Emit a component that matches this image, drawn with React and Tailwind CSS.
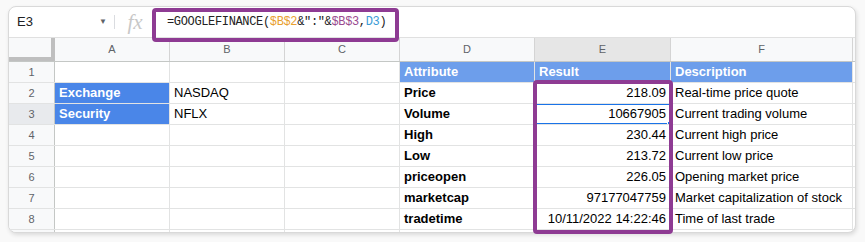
import React from "react";

const cols = [
  { key: "A", w: "w-[115px]" },
  { key: "B", w: "w-[115px]" },
  { key: "C", w: "w-[115px]" },
  { key: "D", w: "w-[135px]" },
  { key: "E", w: "w-[136px]" },
  { key: "F", w: "w-[182px]" },
];

const rows = [
  { n: 1, A: "", B: "", D: "Attribute", E: "Result", F: "Description", head: true },
  { n: 2, A: "Exchange", B: "NASDAQ", D: "Price", E: "218.09", F: "Real-time price quote" },
  { n: 3, A: "Security", B: "NFLX", D: "Volume", E: "10667905", F: "Current trading volume" },
  { n: 4, D: "High", E: "230.44", F: "Current high price" },
  { n: 5, D: "Low", E: "213.72", F: "Current low price" },
  { n: 6, D: "priceopen", E: "226.05", F: "Opening market price" },
  { n: 7, D: "marketcap", E: "97177047759", F: "Market capitalization of stock" },
  { n: 8, D: "tradetime", E: "10/11/2022 14:22:46", F: "Time of last trade" },
];

const Cell = ({ w, className = "", children }) => (
  <div className={`${w} shrink-0 h-full border-r border-[#e2e3e3] px-[4px] flex items-center overflow-hidden whitespace-nowrap ${className}`}>
    {children}
  </div>
);

export default function App() {
  return (
    <div className="w-[865px] h-[242px] bg-[#f9f9f9] relative" style={{ fontFamily: '"Liberation Sans", Arial, sans-serif' }}>
      <div className="absolute left-[8px] top-[6px] w-[848px] h-[227px] bg-white rounded-[8px] border border-[#d9d9d9] shadow-[1px_2px_4px_rgba(0,0,0,0.12)] overflow-hidden">
        {/* formula bar */}
        <div className="h-[31px] flex items-center border-b border-[#e0e0e0] text-[13px]">
          <div className="w-[104px] pl-[8px] pr-[6px] flex items-center justify-between text-[#202124]">
            <span>E3</span>
            <span className="text-[#5f6368] text-[8px]">▼</span>
          </div>
          <div className="w-px h-[14px] bg-[#dadce0] ml-[1px]"></div>
          <div className="w-[40px] flex justify-center text-[#c8c8c8] italic text-[21px] leading-none" style={{ fontFamily: '"Liberation Serif", serif' }}>fx</div>
          <div className="pl-[12px] text-[12px] tracking-[-0.35px] text-[#222]" style={{ fontFamily: '"Liberation Mono", monospace' }}>
            =GOOGLEFINANCE(<span className="text-[#e8a02f]">$B$2</span>&amp;":"&amp;<span className="text-[#9a4a8f]">$B$3</span>,<span className="text-[#3b9bd6]">D3</span>)
          </div>
        </div>

        {/* column headers */}
        <div className="h-[24px] flex bg-[#f8f9fa] text-[11px] text-[#5f6368] border-b border-[#c4c7c5]">
          <div className="w-[46px] shrink-0 h-full border-r-[4px] border-b-[4px] border-[#bfbfbf]"></div>
          {cols.map((c) => (
            <div key={c.key} className={`${c.w} shrink-0 h-full border-r border-[#d4d4d4] flex items-center justify-center ${c.key === "E" ? "bg-[#e6e6e6]" : ""}`}>
              {c.key}
            </div>
          ))}
        </div>

        {/* rows */}
        {rows.map((r) => (
          <div key={r.n} className="h-[21px] flex border-b border-[#e2e3e3] text-[13px] text-black">
            <div className={`w-[46px] shrink-0 h-full border-r border-[#c4c7c5] flex items-center justify-center text-[11px] text-[#5f6368] ${r.n === 3 ? "bg-[#e8eaed]" : "bg-[#f8f9fa]"}`}>
              {r.n}
            </div>
            <Cell w="w-[115px]" className={r.n === 2 || r.n === 3 ? "bg-[#4a86e8] text-white font-bold" : ""}>{r.A}</Cell>
            <Cell w="w-[115px]">{r.B}</Cell>
            <Cell w="w-[115px]"></Cell>
            <Cell w="w-[135px]" className={r.head ? "bg-[#6d9eeb] text-white font-bold" : "font-bold"}>{r.D}</Cell>
            <Cell w="w-[136px]" className={r.head ? "bg-[#6d9eeb] text-white font-bold" : "justify-end relative"}>
              {r.n === 3 && (
                <>
                  <div className="absolute left-0 right-0 top-[-1px] h-[2px] bg-[#1a73e8]"></div>
                  <div className="absolute left-0 right-0 bottom-[-1px] h-[2px] bg-[#1a73e8]"></div>
                  <div className="absolute right-[-3px] bottom-[-3px] w-[6px] h-[6px] bg-[#1a73e8] border border-white"></div>
                </>
              )}
              {r.E}
            </Cell>
            <Cell w="w-[182px]" className={r.head ? "bg-[#6d9eeb] text-white font-bold" : ""}>{r.F}</Cell>
          </div>
        ))}
        <div className="h-[6px] flex">
          <div className="w-[46px] shrink-0 h-full border-r border-[#c4c7c5] bg-[#f8f9fa]"></div>
          {cols.map((c) => (
            <div key={c.key} className={`${c.w} shrink-0 h-full border-r border-[#e2e3e3]`}></div>
          ))}
        </div>
      </div>

      {/* purple highlight boxes */}
      <div className="absolute left-[152px] top-[8px] w-[247px] h-[34px] border-[4px] border-[#8e3b93] rounded-[4px]"></div>
      <div className="absolute left-[533px] top-[80px] w-[140px] h-[154px] border-[4px] border-[#8e3b93] rounded-[4px]"></div>
    </div>
  );
}
